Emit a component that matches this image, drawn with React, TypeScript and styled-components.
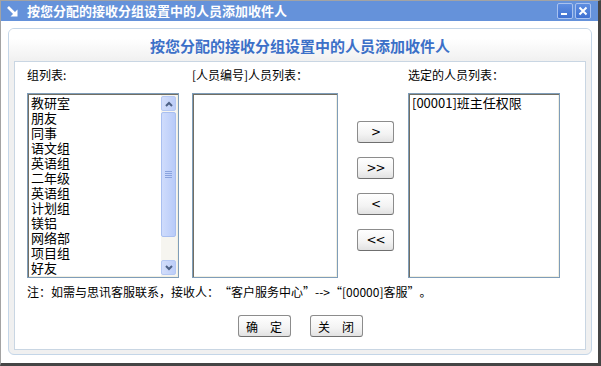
import styled, { createGlobalStyle } from "styled-components";

const GlobalStyle = createGlobalStyle`
    html, body {
        margin: 0;
        padding: 0;
        background: #ffffff;
    }
    body {
        font-family: "Noto Sans CJK SC", "DejaVu Sans", sans-serif;
        font-size: 12px;
        color: #000;
    }
`;

const Window = styled.div`
    width: 601px;
    height: 366px;
    box-sizing: border-box;
    border-top: 1px solid #a3a3a3;
    border-left: 1px solid #a3a3a3;
    border-right: 3px solid #454545;
    border-bottom: 3px solid #454545;
    display: flex;
    flex-direction: column;
    background: #ffffff;
`;

const TitleBar = styled.div`
    height: 20px;
    background: #6592da;
    display: flex;
    align-items: center;
    padding: 0 7px 0 6px;
    flex-shrink: 0;
`;

const TitleText = styled.span`
    color: #ffffff;
    font-weight: bold;
    font-size: 13px;
    line-height: 20px;
    margin-left: 9px;
`;

const WinButtons = styled.div`
    margin-left: auto;
    display: flex;
    gap: 2px;
`;

const WinButton = styled.div`
    width: 16px;
    height: 16px;
    box-sizing: border-box;
    border: 1px solid #a9c2f0;
    border-radius: 2px;
    background: linear-gradient(#5f8ee0, #3f71d2);
    display: flex;
    align-items: center;
    justify-content: center;
`;

const Body = styled.div`
    flex: 1;
    padding: 7px 6px 7px 7px;
`;

const Panel = styled.div`
    border: 1px solid #c4d6e8;
    border-radius: 6px;
    background: #f0f0f0;
    overflow: hidden;
`;

const PanelHeader = styled.div`
    height: 32px;
    background: linear-gradient(#ffffff 30%, #f0f0f0);
    display: flex;
    align-items: center;
    justify-content: center;
    color: #3c70c8;
    font-weight: bold;
    font-size: 15px;
`;

const PanelBody = styled.div`
    padding: 0 5px 4px 5px;
`;

const InnerBox = styled.div`
    height: 289px;
    box-sizing: border-box;
    border: 1px solid #c9d6e3;
    background: #ffffff;
    padding: 5px 12px 0 12px;
`;

const Columns = styled.div`
    display: flex;
    align-items: flex-start;
`;

const Column = styled.div<{ $w: number; $ml?: number }>`
    width: ${(p) => p.$w}px;
    margin-left: ${(p) => p.$ml ?? 0}px;
    display: flex;
    flex-direction: column;
`;

const Label = styled.div`
    height: 16px;
    line-height: 16px;
    margin-bottom: 10px;
    white-space: nowrap;
`;

const ListBox = styled.div`
    height: 185px;
    box-sizing: border-box;
    border: 1px solid #7f9db9;
    box-shadow: inset 1px 1px #716f64, inset -1px -1px #f1efe2;
    background: #ffffff;
    padding: 1px;
    display: flex;
    overflow: hidden;
`;

const Items = styled.div`
    flex: 1;
    padding-left: 2px;
    font-size: 13px;
    line-height: 15px;
    overflow: hidden;
`;

const Item = styled.div`
    height: 15px;
    white-space: nowrap;
`;

const ScrollBar = styled.div`
    width: 15px;
    padding: 1px 1px 1px 0;
    background: #f6f5f0;
    display: flex;
    flex-direction: column;
`;

const ScrollBtn = styled.div`
    height: 15px;
    box-sizing: border-box;
    border: 1px solid #b5c8f3;
    border-radius: 2px;
    background: linear-gradient(90deg, #d3defa, #bccdf8);
    display: flex;
    align-items: center;
    justify-content: center;
`;

const Thumb = styled.div`
    height: 125px;
    margin-top: 1px;
    box-sizing: border-box;
    border: 1px solid #a9bff0;
    border-radius: 2px;
    background: linear-gradient(90deg, #cfdcfc, #b8cbf9);
    display: flex;
    align-items: center;
    justify-content: center;
`;

const Spacer = styled.div`
    flex: 1;
`;

const MoveButtons = styled.div`
    display: flex;
    flex-direction: column;
    gap: 14px;
    padding: 54px 0 0 19px;
`;

const Btn = styled.button<{ $w: number }>`
    width: ${(p) => p.$w}px;
    height: 22px;
    padding: 0;
    box-sizing: border-box;
    border: 1px solid #8c8c8c;
    border-bottom-color: #6f6f6f;
    border-radius: 3px;
    background: linear-gradient(#ffffff, #f3f3f3 60%, #e2e2e2);
    font-family: "Noto Sans CJK SC", sans-serif;
    font-size: 12px;
    color: #000;
    white-space: pre;
`;

const ArrowBtn = styled(Btn)`
    font-family: "DejaVu Sans", sans-serif;
    font-size: 12px;
    letter-spacing: -1px;
`;

const Note = styled.div`
    margin-top: 6px;
    line-height: 16px;
    white-space: nowrap;
`;

// full-width curly quote, as the original bitmap font draws it
const Quote = styled.span<{ $open?: boolean }>`
    display: inline-block;
    width: 12px;
    text-align: ${(p) => (p.$open ? "right" : "left")};
`;

const Footer = styled.div`
    display: flex;
    justify-content: center;
    gap: 19px;
    margin-top: 15px;
`;

const groups = ["教研室", "朋友", "同事", "语文组", "英语组", "二年级", "英语组", "计划组", "镁铝", "网络部", "项目组", "好友"];

function Chevron({ up }: { up: boolean }) {
    return (
        <svg width="8" height="6" viewBox="0 0 8 6">
            <path d={up ? "M1 5 L4 2 L7 5" : "M1 1 L4 4 L7 1"} stroke="#4d6185" strokeWidth="2" fill="none" />
        </svg>
    );
}

export default function App() {
    return (
        <>
            <GlobalStyle />
            <Window lang="zh-CN">
                <TitleBar>
                    <svg width="11" height="11" viewBox="0 0 11 11">
                        <path d="M1 1 L8 8" stroke="#fff" strokeWidth="2.6" />
                        <path d="M10.5 3.5 V10.5 H3.5 Z" fill="#fff" />
                    </svg>
                    <TitleText>按您分配的接收分组设置中的人员添加收件人</TitleText>
                    <WinButtons>
                        <WinButton>
                            <svg width="14" height="14" viewBox="0 0 14 14">
                                <rect x="3" y="9" width="6" height="2" fill="#fff" />
                            </svg>
                        </WinButton>
                        <WinButton>
                            <svg width="14" height="14" viewBox="0 0 14 14">
                                <path d="M3.5 3.5 L10.5 10.5 M10.5 3.5 L3.5 10.5" stroke="#fff" strokeWidth="2" />
                            </svg>
                        </WinButton>
                    </WinButtons>
                </TitleBar>
                <Body>
                    <Panel>
                        <PanelHeader>按您分配的接收分组设置中的人员添加收件人</PanelHeader>
                        <PanelBody>
                            <InnerBox>
                                <Columns>
                                    <Column $w={152}>
                                        <Label>组列表:</Label>
                                        <ListBox>
                                            <Items>
                                                {groups.map((g, i) => (
                                                    <Item key={i}>{g}</Item>
                                                ))}
                                            </Items>
                                            <ScrollBar>
                                                <ScrollBtn>
                                                    <Chevron up />
                                                </ScrollBtn>
                                                <Thumb>
                                                    <svg width="7" height="8" viewBox="0 0 7 8">
                                                        <path d="M0 0.5 H7 M0 2.5 H7 M0 4.5 H7 M0 6.5 H7" stroke="#8aa3de" strokeWidth="1" />
                                                    </svg>
                                                </Thumb>
                                                <Spacer />
                                                <ScrollBtn>
                                                    <Chevron up={false} />
                                                </ScrollBtn>
                                            </ScrollBar>
                                        </ListBox>
                                    </Column>
                                    <Column $w={146} $ml={13}>
                                        <Label>[人员编号]人员列表：</Label>
                                        <ListBox />
                                    </Column>
                                    <Column $w={70}>
                                        <MoveButtons>
                                            <ArrowBtn $w={37}>&gt;</ArrowBtn>
                                            <ArrowBtn $w={37}>&gt;&gt;</ArrowBtn>
                                            <ArrowBtn $w={37}>&lt;</ArrowBtn>
                                            <ArrowBtn $w={37}>&lt;&lt;</ArrowBtn>
                                        </MoveButtons>
                                    </Column>
                                    <Column $w={152}>
                                        <Label>选定的人员列表：</Label>
                                        <ListBox>
                                            <Items>
                                                <Item>[00001]班主任权限</Item>
                                            </Items>
                                        </ListBox>
                                    </Column>
                                </Columns>
                                <Note>
                                    注：如需与思讯客服联系，接收人：<Quote $open>“</Quote>客户服务中心<Quote>”</Quote>--&gt;<Quote $open>“</Quote>[00000]客服<Quote>”</Quote>。
                                </Note>
                                <Footer>
                                    <Btn $w={53}>{"确　定"}</Btn>
                                    <Btn $w={53}>{"关　闭"}</Btn>
                                </Footer>
                            </InnerBox>
                        </PanelBody>
                    </Panel>
                </Body>
            </Window>
        </>
    );
}
